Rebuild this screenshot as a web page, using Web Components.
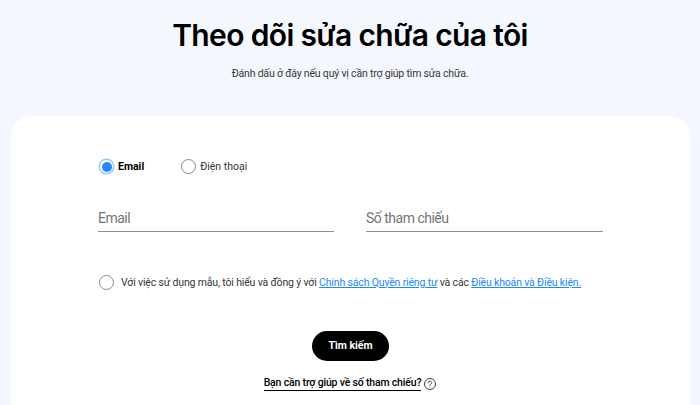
<!DOCTYPE html>
<html lang="vi">
<head>
<meta charset="utf-8">
<title>Theo dõi sửa chữa của tôi</title>
<style>
  html, body { margin: 0; height: 405px; overflow: hidden; background: #f5f7ff; }
  body { font-family: 'Roboto', 'Noto Sans', sans-serif; }
</style>
</head>
<body>
<track-page></track-page>
<script>
// page heading
const headTemplate = document.createElement('template');
headTemplate.innerHTML = `
<style>
  :host { display: block; height: 116px; padding-top: 17px; box-sizing: border-box; text-align: center; }
  h1 { margin: 0; font: 600 30px/36px 'Inter', sans-serif; letter-spacing: -0.65px; color: #000; }
  p { margin: 14px 0 0; font: 400 10.5px/14px 'Roboto', sans-serif; letter-spacing: -0.19px; color: #363636; }
</style>
<h1><slot name="title"></slot></h1>
<p><slot name="sub"></slot></p>
`;
class TrackHead extends HTMLElement {
  constructor() {
    super();
    this.attachShadow({ mode: 'open' });
    this.shadowRoot.appendChild(headTemplate.content.cloneNode(true));
  }
}
customElements.define('track-head', TrackHead);

// radio dot with label
const radioTemplate = document.createElement('template');
radioTemplate.innerHTML = `
<style>
  :host { display: inline-flex; align-items: center; gap: 4px; font: 400 10.5px/16px 'Roboto', sans-serif; color: #363636; }
  .dot { width: 13px; height: 13px; border: 1px solid #8a8a8a; border-radius: 50%; background: #fff; display: flex; align-items: center; justify-content: center; flex: none; }
  .text { padding-top: 1px; }
  :host([checked]) { font-weight: 700; color: #000; }
  :host([checked]) .dot { border-color: #9cc6fb; box-shadow: 0 0 0 0.5px #9cc6fb; }
  :host([checked]) .dot::after { content: ''; width: 10px; height: 10px; border-radius: 50%; background: #2189ff; }
</style>
<span class="dot"></span><span class="text"><slot></slot></span>
`;
class TrackRadio extends HTMLElement {
  constructor() {
    super();
    this.attachShadow({ mode: 'open' });
    this.shadowRoot.appendChild(radioTemplate.content.cloneNode(true));
  }
}
customElements.define('track-radio', TrackRadio);

// underlined text field
const fieldTemplate = document.createElement('template');
fieldTemplate.innerHTML = `
<style>
  :host { display: block; height: 30px; box-sizing: border-box; border-bottom: 1px solid #8f8f8f; font: 400 14px/32px 'Roboto', sans-serif; letter-spacing: -0.5px; color: #757575; }
</style>
<slot></slot>
`;
class TrackField extends HTMLElement {
  constructor() {
    super();
    this.attachShadow({ mode: 'open' });
    this.shadowRoot.appendChild(fieldTemplate.content.cloneNode(true));
  }
}
customElements.define('track-field', TrackField);

// white form card
const cardTemplate = document.createElement('template');
cardTemplate.innerHTML = `
<style>
  :host { display: block; margin: 0 10px 0 11px; height: 289px; box-sizing: border-box; background: #fff; border-radius: 20px 20px 0 0; padding: 42px 87px 0; }
  .choices { display: flex; gap: 37px; padding-left: 1px; }
  .fields { display: grid; grid-template-columns: 236px 237px; gap: 32px; margin-top: 27px; }
  .consent { display: flex; align-items: center; gap: 7px; margin-top: 42.5px; padding-left: 1px; font: 400 10.5px/16px 'Roboto', sans-serif; letter-spacing: -0.16px; color: #363636; white-space: nowrap; }
  .consent track-radio { gap: 0; }
  a { color: #2189ff; text-decoration: underline; }
  .actions { display: flex; flex-direction: column; align-items: center; margin-top: 40.5px; }
  button { width: 77px; height: 30px; border: 0; border-radius: 15px; background: #000; color: #fff; font: 700 10.5px/30px 'Roboto', sans-serif; padding: 0; }
  .help { display: flex; align-items: center; gap: 2px; margin-top: 15px; font: 500 10.5px/14px 'Roboto', sans-serif; letter-spacing: -0.18px; color: #000; }
  .help span { border-bottom: 1.5px solid #000; }
  svg { width: 14px; height: 14px; display: block; }
</style>
<div class="choices">
  <track-radio checked>Email</track-radio>
  <track-radio>Điện thoại</track-radio>
</div>
<div class="fields">
  <track-field>Email</track-field>
  <track-field>Số tham chiếu</track-field>
</div>
<div class="consent">
  <track-radio></track-radio>
  <div>Với việc sử dụng mẫu, tôi hiểu và đồng ý với <a>Chính sách Quyền riêng tư</a> và các <a>Điều khoản và Điều kiện.</a></div>
</div>
<div class="actions">
  <button type="button">Tìm kiếm</button>
  <div class="help">
    <span>Bạn cần trợ giúp về số tham chiếu?</span>
    <svg viewBox="0 0 14 14" fill="none" stroke="#444" stroke-width="1">
      <circle cx="7" cy="7" r="5.5"/>
      <path d="M5.3 5.7a1.7 1.7 0 1 1 2.6 1.4c-.6.35-.9.7-.9 1.2" stroke-linecap="round"/>
      <circle cx="7" cy="10" r=".6" fill="#444" stroke="none"/>
    </svg>
  </div>
</div>
`;
class TrackCard extends HTMLElement {
  constructor() {
    super();
    this.attachShadow({ mode: 'open' });
    this.shadowRoot.appendChild(cardTemplate.content.cloneNode(true));
  }
}
customElements.define('track-card', TrackCard);

// whole page
const pageTemplate = document.createElement('template');
pageTemplate.innerHTML = `
<style>
  :host { display: block; }
</style>
<track-head>
  <span slot="title">Theo dõi sửa chữa của tôi</span>
  <span slot="sub">Đánh dấu ở đây nếu quý vị cần trợ giúp tìm sửa chữa.</span>
</track-head>
<track-card></track-card>
`;
class TrackPage extends HTMLElement {
  constructor() {
    super();
    this.attachShadow({ mode: 'open' });
    this.shadowRoot.appendChild(pageTemplate.content.cloneNode(true));
  }
}
customElements.define('track-page', TrackPage);
</script>
</body>
</html>
